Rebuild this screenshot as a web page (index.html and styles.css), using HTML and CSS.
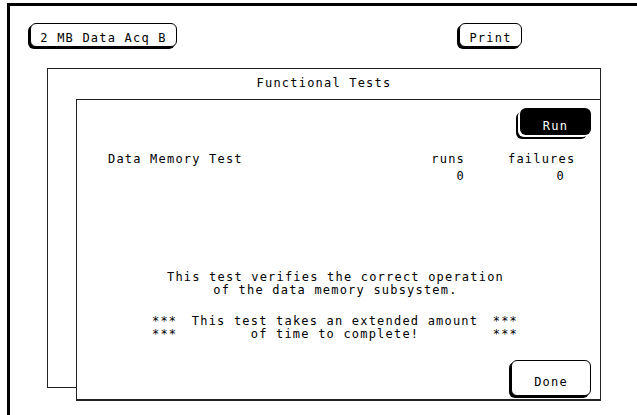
FILE: index.html
```html
<!DOCTYPE html>
<html>

	<head>
		<meta charset="UTF-8">
		<title>Functional Tests</title>
		<link rel="stylesheet" href="styles.css">
	</head>

	<body>
		<div class="screen">
			<div class="toolbar">
				<button class="key key-card">2 MB Data Acq B</button>
				<button class="key key-print">Print</button>
			</div>
			<div class="dialog">
				<div class="dialog-title">Functional Tests</div>
				<div class="panel">
					<div class="run-row">
						<button class="key key-run">Run</button>
					</div>
					<div class="results">
						<span class="test-name">Data Memory Test</span>
						<span class="runs">runs</span>
						<span class="fails">failures</span>
						<span></span>
						<span class="runs">0</span>
						<span class="fails fails-count">0</span>
					</div>
					<p class="note">This test verifies the correct operation<br>of the data memory subsystem.</p>
					<div class="warn">
						<div class="warn-line">
							<span>***</span>
							<span class="warn-text">This test takes an extended amount</span>
							<span>***</span>
						</div>
						<div class="warn-line">
							<span>***</span>
							<span class="warn-text">of time to complete!</span>
							<span>***</span>
						</div>
					</div>
					<div class="done-row">
						<button class="key key-done">Done</button>
					</div>
				</div>
			</div>
		</div>
	</body>

</html>
```

FILE: styles.css
```css
* {
	margin: 0;
	padding: 0;
	box-sizing: border-box;
}

html,
body {
	height: 100%;
	overflow: hidden;
	background: #fff;
}

body {
	font-family: "DejaVu Sans Mono", monospace;
	font-size: 12px;
	line-height: 13px;
	letter-spacing: 1.2px;
	color: #000;
}

.screen {
	margin: 3px 0 0 7px;
	height: calc(100% - 3px);
	border-top: 3px solid #000;
	border-left: 3px solid #000;
}

.toolbar {
	display: flex;
	padding: 17px 0 0 20px;
}

.key {
	font: inherit;
	letter-spacing: inherit;
	color: #000;
	background: #fff;
	border: 1px solid #000;
	border-radius: 6px;
	box-shadow: -2px 2px 0 #000;
	text-align: center;
}

.key-card {
	width: 147px;
	height: 24px;
	padding-top: 6px;
}

.key-print {
	width: 63px;
	height: 24px;
	padding-top: 6px;
	margin-left: 282px;
}

.dialog {
	width: 554px;
	height: 320px;
	margin: 21px 0 0 37px;
	border: 1px solid #222;
}

.dialog-title {
	height: 30px;
	padding-top: 8px;
	text-align: center;
}

.panel {
	display: flex;
	flex-direction: column;
	width: 525px;
	height: 302px;
	margin-left: 28px;
	background: #fff;
	border: 1px solid #222;
	border-bottom-width: 2px;
}

.run-row {
	display: flex;
	justify-content: flex-end;
	padding: 8px 9px 0 0;
}

.key-run {
	width: 71px;
	height: 27px;
	padding-top: 10px;
	color: #fff;
	background: #000;
	border: none;
	box-shadow: -2px 2px 0 #fff, -4px 4px 0 #000;
}

.results {
	display: grid;
	grid-template-columns: 1fr 40px 67px;
	column-gap: 43px;
	row-gap: 4px;
	margin-top: 18px;
	padding: 0 25px 0 31px;
}

.runs {
	text-align: right;
}

.fails-count {
	text-align: right;
	padding-right: 10px;
}

.note {
	margin-top: 88px;
	padding-right: 6px;
	text-align: center;
}

.warn {
	width: 366px;
	margin: 18px 0 0 75px;
}

.warn-line {
	display: flex;
}

.warn-text {
	flex: 1;
	text-align: center;
}

.done-row {
	display: flex;
	justify-content: flex-end;
	margin-top: auto;
	padding: 0 9px 3px 0;
}

.key-done {
	width: 80px;
	height: 36px;
	padding-top: 9px;
}
```
